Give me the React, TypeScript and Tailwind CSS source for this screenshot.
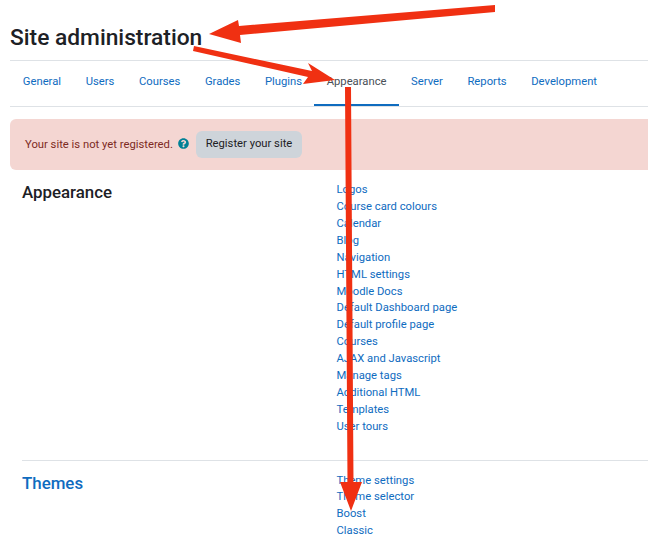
const tabs = ['General', 'Users', 'Courses', 'Grades', 'Plugins', 'Appearance', 'Server', 'Reports', 'Development'];

const appearanceLinks = [
  'Logos',
  'Course card colours',
  'Calendar',
  'Blog',
  'Navigation',
  'HTML settings',
  'Moodle Docs',
  'Default Dashboard page',
  'Default profile page',
  'Courses',
  'AJAX and Javascript',
  'Manage tags',
  'Additional HTML',
  'Templates',
  'User tours',
];

const themeLinks = ['Theme settings', 'Theme selector', 'Boost', 'Classic'];

function LinkList({ items }: { items: string[] }) {
  return (
    <ul className="flex flex-col">
      {items.map((item) => (
        <li key={item} className="h-[16.93px] text-[11.25px] leading-[16.93px] text-[#0f6cbf]">
          {item}
        </li>
      ))}
    </ul>
  );
}

export default function App() {
  return (
    <div className="relative h-[548px] w-[648px] overflow-hidden bg-white font-['Roboto',sans-serif] text-[#1d2125]">
      <div className="pl-[10px]">
        {/* Page title */}
        <h1 className="h-[60px] pt-[23px] text-[22.75px] font-medium leading-[30px]">Site administration</h1>

        {/* Tabs */}
        <nav className="flex h-[47px] border-y border-[#dee2e6] pl-[0.5px]">
          {tabs.map((tab) => (
            <a
              key={tab}
              className={
                tab === 'Appearance'
                  ? 'border-b-2 border-[#0f6cbf] px-[12.3px] pt-[12px] text-[11.25px] leading-[17px] text-[#495057]'
                  : 'px-[12.3px] pt-[12px] text-[11.25px] leading-[17px] text-[#0f6cbf]'
              }
            >
              {tab}
            </a>
          ))}
        </nav>

        {/* Registration notice */}
        <div className="mt-[12px] flex h-[51px] items-center rounded-l-[6px] bg-[#f4d6d2] pl-[15px] text-[11.25px] text-[#7d2a23]">
          <span className="pt-[1px]">Your site is not yet registered.</span>
          <svg viewBox="0 0 512 512" className="ml-[5.5px] mb-[3px] h-[11px] w-[11px] fill-[#008196]">
            <path d="M504 256c0 137-111 248-248 248S8 393 8 256 119 8 256 8s248 111 248 248zM262.700 90c-54.500 0-89.300 23-116.500 63.800-3.500 5.300-2.400 12.400 2.700 16.300l34.700 26.300c5.200 3.900 12.600 3 16.700-2.100 17.900-22.700 30.100-35.800 57.300-35.800 20.400 0 45.700 13.100 45.700 32.900 0 15-12.400 22.700-32.500 34C247.100 238.500 216 254.900 216 296v4c0 6.600 5.400 12 12 12h56c6.600 0 12-5.400 12-12v-1.300c0-28.500 83.200-29.600 83.200-106.700 0-58-60.200-102-116.500-102zM256 338c-25.400 0-46 20.600-46 46 0 25.400 20.600 46 46 46s46-20.600 46-46c0-25.400-20.600-46-46-46z" />
          </svg>
          <button className="ml-[6.75px] h-[27px] rounded-[6px] bg-[#ced4da] px-[9.5px] text-[#1d2125]">
            Register your site
          </button>
        </div>

        {/* Appearance section */}
        <section className="flex pl-[12px] pt-[12px]">
          <h2 className="w-[314.500px] text-[16.875px] font-medium leading-[20px]">Appearance</h2>
          <LinkList items={appearanceLinks} />
        </section>

        <div className="ml-[12px] mt-[24px] border-t border-[#dee2e6]" />

        {/* Themes section */}
        <section className="flex pl-[12px] pt-[11.72px]">
          <h2 className="w-[314.500px] text-[16.875px] font-medium leading-[21px] text-[#0f6cbf]">Themes</h2>
          <LinkList items={themeLinks} />
        </section>
      </div>

      {/* Annotation arrows drawn over the page */}
      <svg viewBox="0 0 648 548" className="absolute left-0 top-0 h-[548px] w-[648px]">
        <g fill="#f03012">
          <polygon points="495,5 495,12 240,35 241,43 209,34 238,20 239,26" />
          <polygon points="194,46 312,71 308,63 335,80 303,84 308,77 193,51" />
          <polygon points="345,87 351,87 353.500,482 362,482 351,511 340,482 347.500,482" />
        </g>
      </svg>
    </div>
  );
}
